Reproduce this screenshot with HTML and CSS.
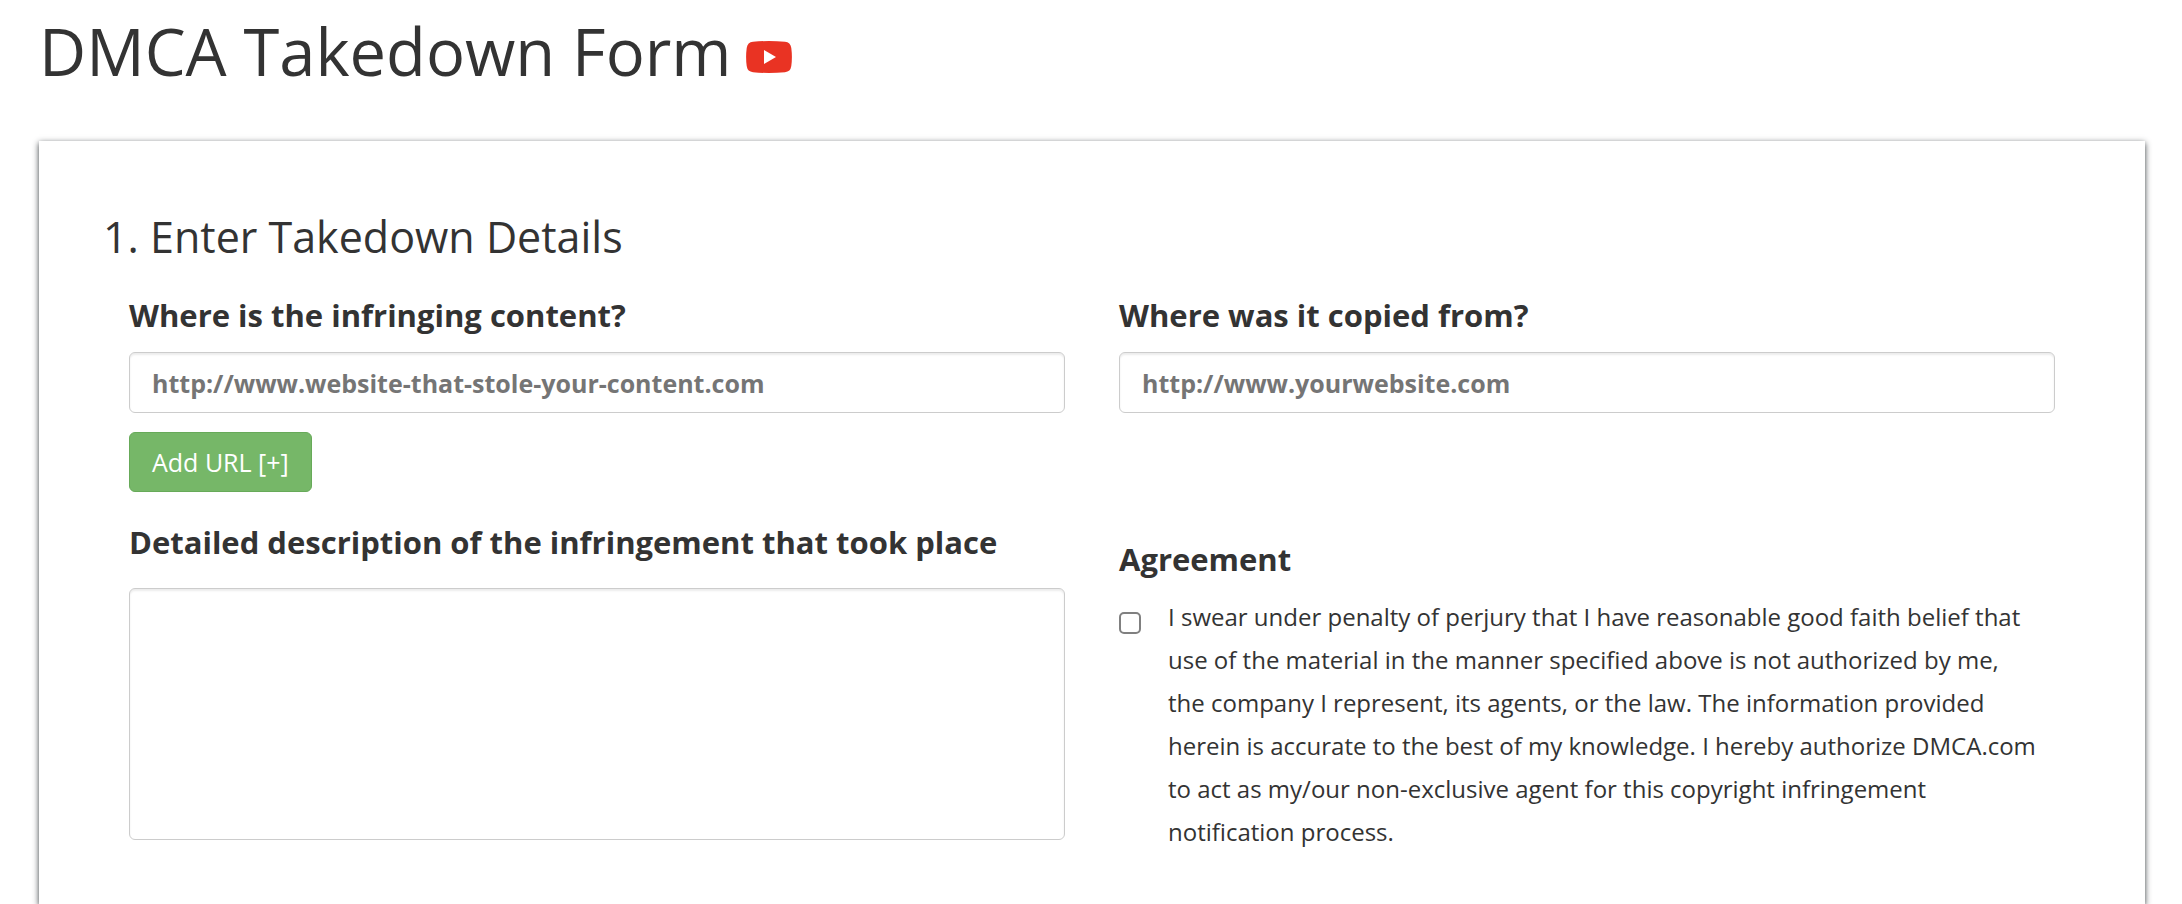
FILE: index.html
```
<!DOCTYPE html>
<html lang="en">

<head>
  <meta charset="UTF-8">
  <meta name="viewport" content="width=device-width, initial-scale=1.0">
  <title>DMCA Takedown Form</title>
  <link rel="stylesheet" href="styles.css">
</head>

<body>

  <header class="page-header">
    <h1>DMCA Takedown Form</h1>
    <svg class="video-icon" viewBox="0 0 46 32" role="img" aria-label="Watch video">
      <path fill="#e93323" d="M7 .8Q23-.7 39 .8Q44.500 1.300 45.300 7Q46.500 16 45.300 25Q44.500 30.700 39 31.200Q23 32.700 7 31.200Q1.500 30.700 .7 25Q-.5 16 .7 7Q1.500 1.300 7 .8Z" />
      <path fill="#fff" d="M18 9v14l12-7z" />
    </svg>
  </header>

  <form class="takedown-form">
    <h2>1. Enter Takedown Details</h2>

    <div class="form-grid">
      <div class="field">
        <label for="infringingUrl">Where is the infringing content?</label>
        <input type="text" id="infringingUrl" class="text-input" placeholder="http://www.website-that-stole-your-content.com">
        <button type="button" class="add-url">Add URL [+]</button>
      </div>

      <div class="field">
        <label for="sourceUrl">Where was it copied from?</label>
        <input type="text" id="sourceUrl" class="text-input" placeholder="http://www.yourwebsite.com">
      </div>

      <div class="field">
        <label for="description" class="description-label">Detailed description of the infringement that took place</label>
        <textarea id="description" class="text-input description"></textarea>
      </div>

      <div class="agreement">
        <h3>Agreement</h3>
        <div class="agreement-row">
          <input type="checkbox" id="agree">
          <label for="agree">I swear under penalty of perjury that I have reasonable good faith belief that use of the material in the manner specified above is not authorized by me, the company I represent, its agents, or the law. The information provided herein is accurate to the best of my knowledge. I hereby authorize DMCA.com to act as my/our non-exclusive agent for this copyright infringement notification process.</label>
        </div>
      </div>
    </div>
  </form>

</body>

</html>
```
FILE: styles.css
```
* {
  box-sizing: border-box;
}

body {
  margin: 0;
  padding: 15px 37px 0 39px;
  min-height: 100vh;
  display: flex;
  flex-direction: column;
  font-family: "Open Sans", sans-serif;
  font-size: 24px;
  color: #333;
  background-color: #fff;
}

h1,
h2,
h3 {
  margin: 0;
}

.page-header {
  display: flex;
  align-items: center;
  gap: 14px;
  margin-bottom: 54px;
}

h1 {
  font-size: 65px;
  font-weight: 400;
  line-height: 72px;
}

.video-icon {
  width: 46px;
  height: 32px;
  margin-top: 12px;
}

.takedown-form {
  flex: 1;
  padding: 72px 64px 51px;
  background-color: #fff;
  box-shadow: 0 2px 6px rgba(32, 38, 42, 0.9);
  /* the card runs off the bottom edge, so only the other sides show a shadow */
  clip-path: inset(-8px -8px 0 -8px);
}

h2 {
  margin-bottom: 32px;
  font-size: 43px;
  font-weight: 400;
  line-height: 48px;
}

.form-grid {
  display: grid;
  grid-template-columns: 1fr 1fr;
  column-gap: 54px;
  row-gap: 28px;
  padding: 0 26px;
}

.field {
  display: flex;
  flex-direction: column;
  align-items: flex-start;
}

.field label,
h3 {
  margin-bottom: 15px;
  font-size: 31px;
  font-weight: 700;
  line-height: 44px;
}

.field .description-label {
  margin-bottom: 24px;
}

.text-input {
  width: 100%;
  height: 61px;
  padding: 10px 22px;
  border: 1px solid #ccc;
  border-radius: 6px;
  background-color: #fff;
  box-shadow: inset 0 2px 2px rgba(0, 0, 0, 0.075);
  color: #555;
  font-family: inherit;
  font-size: 25px;
  font-weight: 700;
}

.text-input::placeholder {
  color: #757575;
}

.description {
  height: 252px;
  resize: none;
}

.add-url {
  height: 60px;
  margin-top: 19px;
  padding: 0 22px;
  border: 1px solid #67aa59;
  border-radius: 6px;
  background-color: #76b768;
  color: #fff;
  font-family: inherit;
  font-size: 25px;
  cursor: pointer;
}

.agreement {
  padding-top: 17px;
}

.agreement h3 {
  margin-bottom: 14px;
}

.agreement-row {
  display: flex;
  align-items: flex-start;
  gap: 27px;
  padding-right: 18px;
  line-height: 43px;
}

.agreement-row input {
  appearance: none;
  flex: none;
  width: 22px;
  height: 22px;
  margin: 17px 0 0;
  border: 2px solid #808080;
  border-radius: 5px;
  background-color: #fff;
}

.agreement-row input:checked {
  border-color: #0075ff;
  background-color: #0075ff;
}
```
